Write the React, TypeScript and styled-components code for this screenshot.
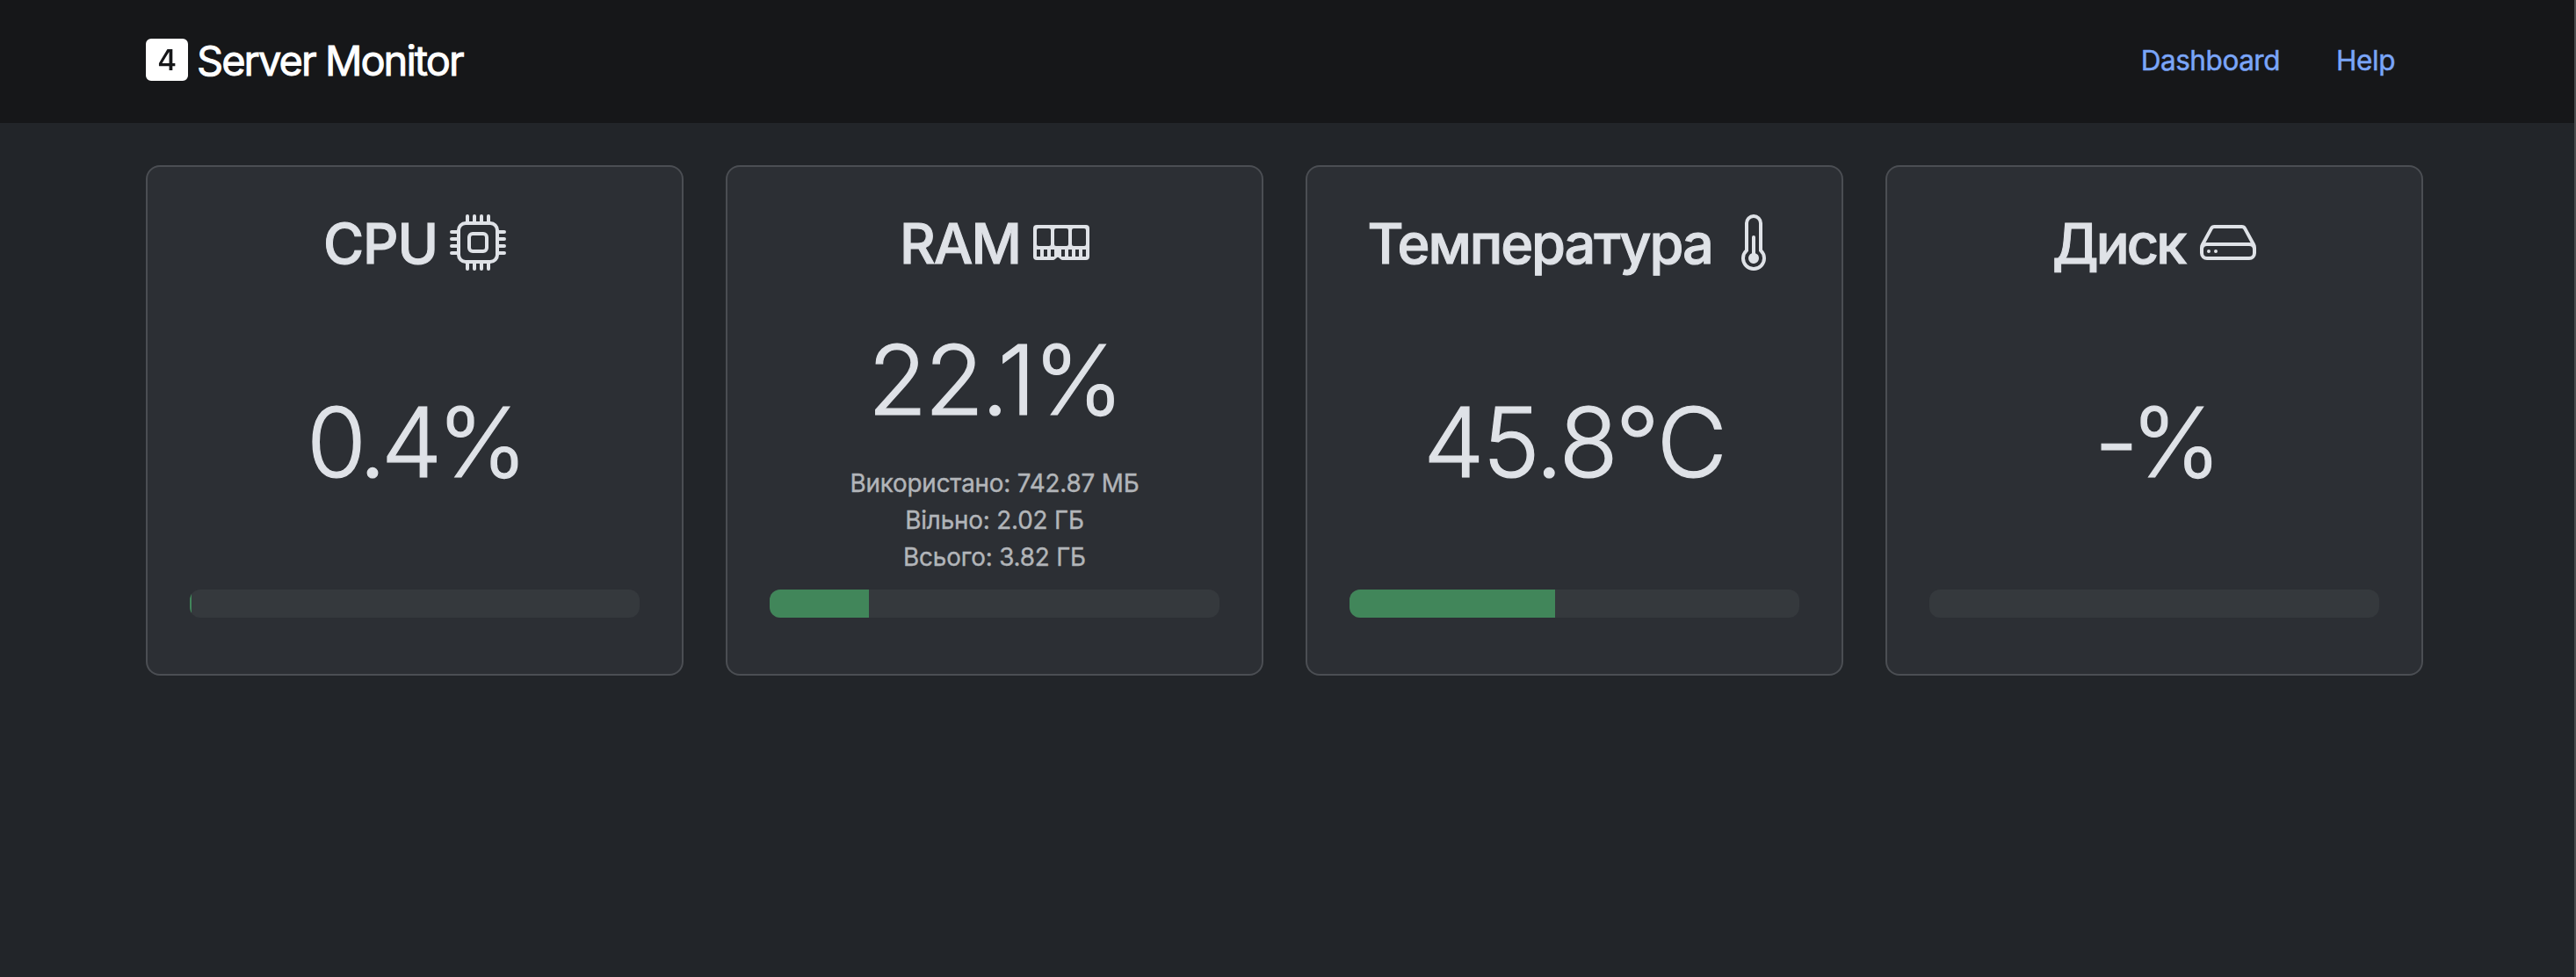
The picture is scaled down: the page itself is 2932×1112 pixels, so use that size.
import React from 'react';
import styled, { createGlobalStyle } from 'styled-components';
import type { IconType } from 'react-icons';
import { BsFill4SquareFill, BsCpu, BsMemory, BsThermometerHalf, BsHdd } from 'react-icons/bs';

const GlobalStyle = createGlobalStyle`
  *, *::before, *::after { box-sizing: border-box; }
  body {
    margin: 0;
    background: #222529;
    color: #dfe2e7;
    font-family: Inter, "Noto Sans", sans-serif;
  }
`;

const Page = styled.div`
  min-height: 1112px;
  border-right: 2px solid #4b4c4e;
`;

const Header = styled.header`
  display: flex;
  align-items: center;
  justify-content: space-between;
  height: 140px;
  padding: 0 172px 4px 166px;
  background: #161719;
`;

const Brand = styled.a`
  display: flex;
  align-items: center;
  gap: 10px;
  color: #fff;
  font-size: 47px;
  line-height: 72px;
  letter-spacing: -1.98px;
  text-decoration: none;

  svg {
    width: 48px;
    height: 48px;
  }
`;

const BrandName = styled.span`
  padding-top: 2px;
  -webkit-text-stroke: 0.9px currentColor;
`;

const Nav = styled.nav`
  display: flex;
`;

const NavLink = styled.a`
  padding: 18px 32px 16px;
  color: #7aa5f8;
  font-size: 31.5px;
  line-height: 48px;
  letter-spacing: -0.45px;
  text-decoration: none;
  -webkit-text-stroke: 0.5px currentColor;
`;

const Grid = styled.main`
  display: grid;
  grid-template-columns: repeat(4, 612px);
  gap: 48px;
  padding: 48px 172px 48px 166px;
`;

const Card = styled.section`
  display: flex;
  flex-direction: column;
  height: 581px;
  padding: 48px;
  border: 2px solid #4b4e53;
  border-radius: 16px;
  background: #2c2f34;
`;

const CardTitle = styled.h1<{ $gap: number; $tracking: number }>`
  display: flex;
  align-items: center;
  justify-content: center;
  gap: ${p => p.$gap}px;
  margin: 0 0 35px;
  font-size: 63px;
  font-weight: 500;
  line-height: 78px;
  letter-spacing: ${p => p.$tracking}px;
  white-space: nowrap;

  span {
    -webkit-text-stroke: 1px currentColor;
  }

  svg {
    flex: none;
    width: 64px;
    height: 64px;
    margin-bottom: 2px;
  }
`;

const Value = styled.div<{ $tracking: number }>`
  display: flex;
  flex: 1;
  align-items: center;
  justify-content: center;
  font-size: 110px;
  font-weight: 300;
  line-height: 134px;
  letter-spacing: ${p => p.$tracking}px;
  -webkit-text-stroke: 1.2px currentColor;
`;

const Details = styled.div`
  margin-top: 16px;
  color: #b2b5b9;
  font-size: 27.8px;
  line-height: 42px;
  letter-spacing: -0.17px;
  text-align: center;
  -webkit-text-stroke: 0.4px currentColor;
`;

const Track = styled.div`
  flex: none;
  height: 32px;
  margin: 16px 0;
  overflow: hidden;
  border-radius: 12px;
  background: #35393d;
`;

const Fill = styled.div`
  height: 100%;
  background: #41865a;
`;

interface Metric {
  title: string;
  icon: IconType;
  gap: number;
  titleTracking: number;
  value: string;
  valueTracking: number;
  percent: number;
  details?: string[];
}

const metrics: Metric[] = [
  { title: 'CPU', icon: BsCpu, gap: 14, titleTracking: -1.1, value: '0.4%', valueTracking: -5.6, percent: 0.4 },
  {
    title: 'RAM',
    icon: BsMemory,
    gap: 15,
    titleTracking: -2,
    value: '22.1%',
    valueTracking: -2.9,
    percent: 22.1,
    details: ['Використано: 742.87 МБ', 'Вільно: 2.02 ГБ', 'Всього: 3.82 ГБ'],
  },
  {
    title: 'Температура',
    icon: BsThermometerHalf,
    gap: 15,
    titleTracking: -2.11,
    value: '45.8°C',
    valueTracking: -1.9,
    percent: 45.8,
  },
  { title: 'Диск', icon: BsHdd, gap: 17.5, titleTracking: -2.9, value: '-%', valueTracking: -8.5, percent: 0 },
];

function MetricCard({ metric }: { metric: Metric }) {
  const Icon = metric.icon;
  return (
    <Card>
      <CardTitle $gap={metric.gap} $tracking={metric.titleTracking}>
        <span>{metric.title}</span>
        <Icon />
      </CardTitle>
      <Value $tracking={metric.valueTracking}>{metric.value}</Value>
      {metric.details && (
        <Details>
          {metric.details.map(line => (
            <div key={line}>{line}</div>
          ))}
        </Details>
      )}
      <Track>
        <Fill style={{ width: `${metric.percent}%` }} />
      </Track>
    </Card>
  );
}

export default function App() {
  return (
    <>
      <GlobalStyle />
      <Page>
        <Header>
          <Brand>
            <BsFill4SquareFill />
            <BrandName>Server Monitor</BrandName>
          </Brand>
          <Nav>
            <NavLink>Dashboard</NavLink>
            <NavLink>Help</NavLink>
          </Nav>
        </Header>
        <Grid>
          {metrics.map(metric => (
            <MetricCard key={metric.title} metric={metric} />
          ))}
        </Grid>
      </Page>
    </>
  );
}
